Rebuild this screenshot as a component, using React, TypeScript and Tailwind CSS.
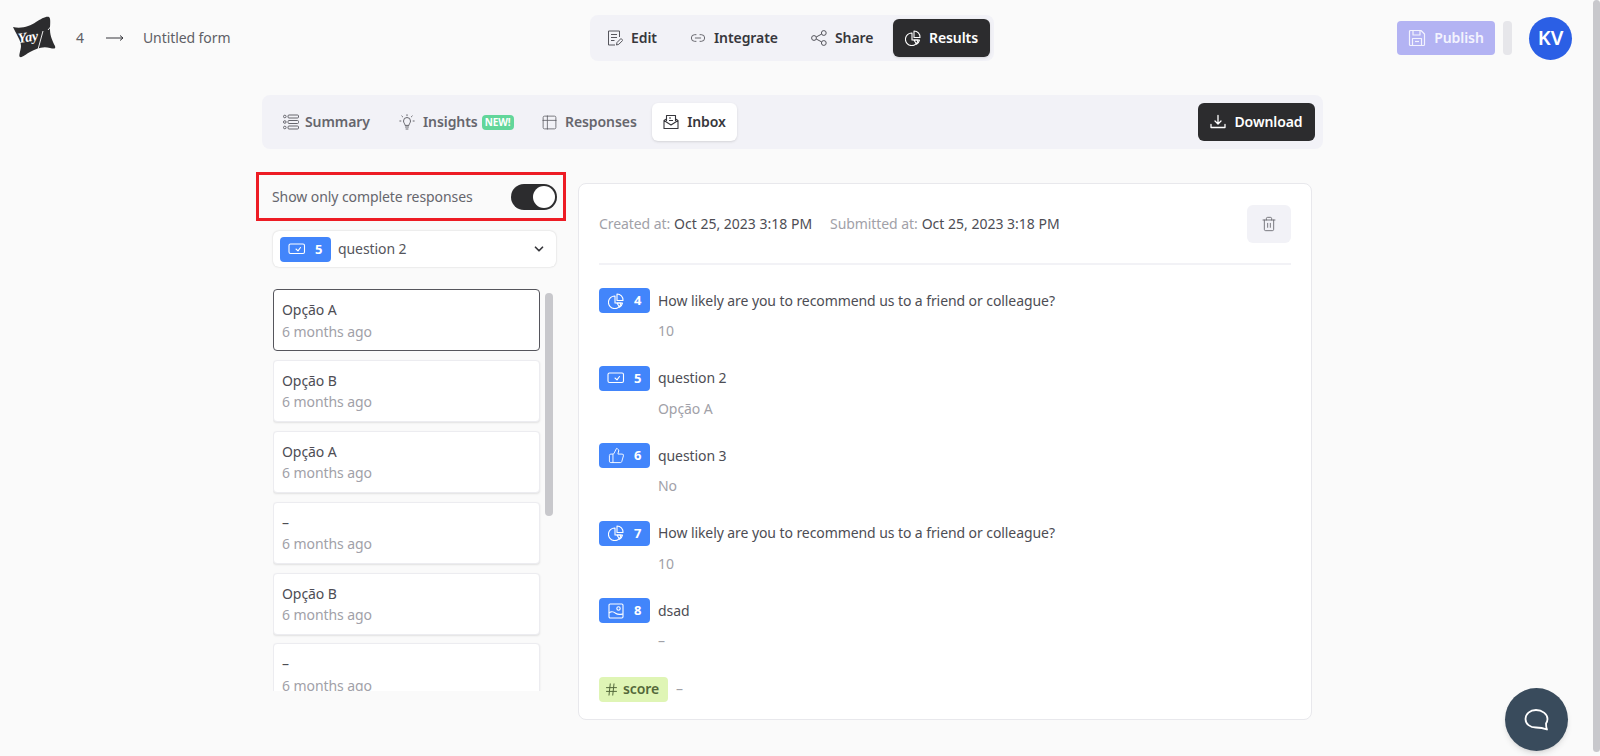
import { ChevronDown, Hash, Link2, ThumbsUp, Trash2, Table2 } from "lucide-react";

const font = "font-['Noto_Sans','Open_Sans',sans-serif] tracking-[-0.005em]";

function LogoMark() {
  return (
    <svg width="44" height="44" viewBox="0 0 44 44">
      <path
        d="M1 11 C10 13 18 10 24 6 C29 3 34 0 37 1 C39 2 38 9 38 14 C38 20 41 26 43 30 C44 33 42 33 38 32 C30 30 24 33 18 36 C14 38 10 42 8 41 C6 40 9 34 9 30 C9 24 4 18 1 11 Z"
        fill="#2c2c2e"
      />
      <text x="6" y="25" fill="#fff" fontSize="14" fontWeight="700" fontStyle="italic" fontFamily="Liberation Serif, serif" transform="rotate(-8 20 22)">
        Yay
      </text>
      <path d="M31 15 L25 37 M36 14 L41 8" stroke="#fff" strokeWidth="0.9" fill="none" />
    </svg>
  );
}

function EditIcon() {
  return (
    <svg width="16" height="16" viewBox="0 0 16 16" fill="none" stroke="currentColor" strokeWidth="1" strokeLinejoin="round">
      <path d="M8 15 H1.5 V1 H12.5 V7" />
      <path d="M4 4.5 H10 M4 7.5 H10 M4 10.5 H7.5" />
      <path d="M9.5 15 L10 12.5 L14 8.5 L15.8 10.3 L11.8 14.3 Z" />
    </svg>
  );
}

function ShareIcon() {
  return (
    <svg width="16" height="16" viewBox="0 0 16 16" fill="none" stroke="currentColor" strokeWidth="1">
      <circle cx="3" cy="8" r="2.4" />
      <circle cx="12.8" cy="3" r="2.4" />
      <circle cx="12.8" cy="13" r="2.4" />
      <path d="M5.2 7 L10.6 4.1 M5.2 9 L10.6 11.9" />
    </svg>
  );
}

function PieIcon({ size = 16 }: { size?: number }) {
  return (
    <svg width={size} height={size} viewBox="0 0 16 16" fill="none" stroke="currentColor" strokeWidth="1.1" strokeLinejoin="round">
      <path d="M7 3 A6.3 6.3 0 1 0 13 10 H7 Z" />
      <path d="M9 1 A6 6 0 0 1 15 7.5 H9 Z" />
      <path d="M9 10 H14.5 C14 12 13 13.5 11.5 14.3 Z" />
    </svg>
  );
}

function InsightIcon() {
  return (
    <svg width="16" height="16" viewBox="0 0 16 16" fill="none" stroke="currentColor" strokeWidth="1" strokeLinecap="round">
      <path d="M6 11 C6 9.5 4.5 9 4.5 7 A3.5 3.5 0 0 1 11.5 7 C11.5 9 10 9.5 10 11 Z" />
      <path d="M6.5 13 H9.5 M7 15 H9" />
      <path d="M8 0.7 V1.7 M2.8 2 L3.6 2.8 M13.2 2 L12.4 2.8 M0.8 7 H1.9 M14.1 7 H15.2" />
    </svg>
  );
}

function SaveIcon() {
  return (
    <svg width="18" height="18" viewBox="0 0 18 18" fill="none" stroke="currentColor" strokeWidth="1.2" strokeLinejoin="round">
      <path d="M1.5 2.5 A1 1 0 0 1 2.5 1.5 H13 L16.5 5 V15.5 A1 1 0 0 1 15.5 16.5 H2.5 A1 1 0 0 1 1.5 15.5 Z" />
      <path d="M5 1.5 V6 H12 V1.5" />
      <rect x="4.5" y="9.5" width="9" height="7" />
      <path d="M7 12.5 H11" />
    </svg>
  );
}

function SummaryIcon() {
  return (
    <svg width="16" height="16" viewBox="0 0 16 16" fill="none" stroke="currentColor" strokeWidth="1">
      <circle cx="1.8" cy="2.5" r="1.3" />
      <circle cx="1.8" cy="8" r="1.3" />
      <circle cx="1.8" cy="13.5" r="1.3" />
      <rect x="5" y="1" width="10.5" height="3" rx="1" />
      <rect x="5" y="6.5" width="10.5" height="3" rx="1" />
      <rect x="5" y="12" width="10.5" height="3" rx="1" />
    </svg>
  );
}

function InboxIcon() {
  return (
    <svg width="16" height="16" viewBox="0 0 16 16" fill="none" stroke="currentColor" strokeWidth="1.1" strokeLinejoin="round">
      <path d="M3.5 7 V1.5 H12.5 V7" />
      <path d="M1 6.5 L3.5 5 M15 6.5 L12.5 5" />
      <path d="M1 6.5 V14.5 H15 V6.5 L8 11 Z" />
      <path d="M6 4 H8 M6 6.5 H10" />
    </svg>
  );
}

function DownloadIcon() {
  return (
    <svg width="16" height="16" viewBox="0 0 16 16" fill="none" stroke="currentColor" strokeWidth="1.3" strokeLinecap="round" strokeLinejoin="round">
      <path d="M8 1.5 V9.5 M5 7 L8 10 L11 7" />
      <path d="M1 10.5 V13.5 H15 V10.5" />
    </svg>
  );
}

function ChoiceIcon() {
  return (
    <svg width="18" height="14" viewBox="0 0 18 14" fill="none" stroke="currentColor" strokeWidth="1.1" strokeLinejoin="round" strokeLinecap="round">
      <rect x="1" y="2" width="15.5" height="9.5" rx="1.5" />
      <path d="M8 7 L10 8.8 L12.5 5.5" />
    </svg>
  );
}

function PictureIcon() {
  return (
    <svg width="16" height="16" viewBox="0 0 16 16" fill="none" stroke="currentColor" strokeWidth="1.1" strokeLinejoin="round">
      <rect x="1" y="1" width="14" height="14" rx="1.2" />
      <circle cx="10.5" cy="5.5" r="1.7" />
      <path d="M1 10 C4 7.5 6 9 8 10.5 C10 12 12 11.5 15 11" />
    </svg>
  );
}

function ChatIcon() {
  return (
    <svg width="28" height="26" viewBox="0 0 28 26" fill="none" stroke="#fff" strokeWidth="1.8" strokeLinejoin="round">
      <path d="M13 3 C7 3 2.5 7 2.5 12 C2.5 17 7 20.5 13 20.5 C16 20.5 19 20.5 24 22.5 C23 20 23 18 23 16.5 C24 15 24.5 13.5 24.5 12 C24.5 7 19 3 13 3 Z" />
    </svg>
  );
}

function TypeBadge({ icon, n }: { icon: React.ReactNode; n: number }) {
  return (
    <div className="w-[51px] h-[25px] shrink-0 bg-[#4285fb] rounded text-white flex items-center pl-2">
      <span className="w-[18px] flex justify-center">{icon}</span>
      <span className="ml-[9px] text-[13px] font-bold">{n}</span>
    </div>
  );
}

const answers = [
  { icon: <PieIcon />, n: 4, title: "How likely are you to recommend us to a friend or colleague?", value: "10" },
  { icon: <ChoiceIcon />, n: 5, title: "question 2", value: "Opção A" },
  { icon: <ThumbsUp size={17} strokeWidth={1.3} />, n: 6, title: "question 3", value: "No" },
  { icon: <PieIcon />, n: 7, title: "How likely are you to recommend us to a friend or colleague?", value: "10" },
  { icon: <PictureIcon />, n: 8, title: "dsad", value: "–" },
];

const items = [
  { title: "Opção A", active: true },
  { title: "Opção B" },
  { title: "Opção A" },
  { title: "–" },
  { title: "Opção B" },
  { title: "–" },
];

export default function App() {
  return (
    <div className={`${font} h-[756px] w-[1600px] overflow-hidden flex bg-[#fafafa] text-[#37373c]`}>
      <div className="flex-1 min-w-0">
        {/* Top bar */}
        <header className="h-[76px] flex items-center pl-3 pr-[21px]">
          <div className="w-[578px] flex items-center text-sm text-[#5f5f66]">
            <LogoMark />
            <span className="ml-[20px]">4</span>
            <span className="ml-[22px] text-[#37373c]">
              <svg width="18" height="8" viewBox="0 0 18 8" fill="none" stroke="currentColor" strokeWidth="1">
                <path d="M0 4 H17 M14 1.5 L17 4 L14 6.5" />
              </svg>
            </span>
            <span className="ml-[19px]">Untitled form</span>
          </div>

          <nav className="h-[46px] bg-[#f2f2f7] rounded-lg flex items-center pl-[17px] pr-1 text-sm font-semibold">
            <div className="flex items-center gap-2 w-[83px]">
              <span className="text-[#55555c]"><EditIcon /></span>
              Edit
            </div>
            <div className="flex items-center gap-2 w-[121px]">
              <Link2 size={16} strokeWidth={1.3} className="text-[#55555c]" />
              Integrate
            </div>
            <div className="flex items-center gap-2 w-[82px]">
              <span className="text-[#55555c]"><ShareIcon /></span>
              Share
            </div>
            <div className="h-[38px] w-[97px] rounded-md bg-[#2c2c2e] text-white flex items-center justify-center gap-2 shadow-sm">
              <PieIcon />
              Results
            </div>
          </nav>

          <div className="ml-auto flex items-center">
            <div className="h-[34px] w-[98px] rounded bg-[#b3b3f3] text-[#f3f3fe] text-sm font-semibold flex items-center justify-center gap-2">
              <SaveIcon />
              Publish
            </div>
            <div className="ml-2 h-[34px] w-[9px] rounded bg-[#e6e6ea]" />
            <div className="ml-[17px] w-[43px] h-[43px] rounded-full bg-[#2b5fe5] text-white text-xl font-semibold flex items-center justify-center">
              KV
            </div>
          </div>
        </header>

        {/* Tabs */}
        <div className="ml-[262px] mt-[19px] w-[1061px] h-[54px] rounded-lg bg-[#f2f2f7] flex items-center justify-between pl-[21px] pr-[8px] text-sm font-semibold text-[#66666d]">
          <div className="flex items-center">
            <div className="flex items-center gap-[6px] w-[116px]">
              <SummaryIcon />
              Summary
            </div>
            <div className="flex items-center gap-2 w-[142px]">
              <InsightIcon />
              <span>Insights</span>
              <span className="-ml-[4px] h-[15px] px-[3px] rounded bg-[#62d69a] text-white text-[10px] font-bold flex items-center">NEW!</span>
            </div>
            <div className="flex items-center gap-[7px] w-[111px]">
              <Table2 size={17} strokeWidth={1.2} />
              Responses
            </div>
            <div className="h-[38px] w-[85px] rounded-md bg-white shadow-sm flex items-center justify-center gap-2 text-[#37373c]">
              <InboxIcon />
              Inbox
            </div>
          </div>
          <div className="h-[38px] w-[117px] rounded-md bg-[#2c2c2e] text-white flex items-center justify-center gap-2">
            <DownloadIcon />
            Download
          </div>
        </div>

        <div className="ml-[256px] flex items-start">
          {/* Left column */}
          <aside className="w-[310px]">
            <div className="mt-[23px] h-[49px] border-[3px] border-[#ed1c24] flex items-center justify-between pl-[13px] pr-[6px] text-sm text-[#66666d]">
              Show only complete responses
              <div className="w-[46px] h-[26px] rounded-full bg-[#2c2c2e] flex items-center justify-end pr-[2px]">
                <div className="w-[22px] h-[22px] rounded-full bg-white" />
              </div>
            </div>

            <div className="ml-[17px] mt-[10px] w-[283px] h-[36px] rounded-md bg-white shadow-[0_0_2px_rgba(0,0,0,0.2)] flex items-center pl-[7px] pr-[10px] text-sm text-[#55555c]">
              <TypeBadge icon={<ChoiceIcon />} n={5} />
              <span className="ml-[7px] flex-1">question 2</span>
              <ChevronDown size={14} strokeWidth={3} className="text-[#37373c]" />
            </div>

            <div className="ml-[17px] mt-[22px] h-[402px] overflow-hidden flex items-start">
              <div className="w-[267px] shrink-0 flex flex-col gap-[8.9px]">
                {items.map((item, i) => (
                  <div
                    key={i}
                    className={`h-[62px] shrink-0 rounded bg-white px-[8px] pt-[9px] text-sm leading-[21.5px] ${
                      item.active ? "border border-[#55555c]" : "border border-[#ececf0] shadow-[0_1px_2px_rgba(0,0,0,0.1)]"
                    }`}
                  >
                    <div className="text-[#4d4d54]">{item.title}</div>
                    <div className="text-[#a1a1a8]">6 months ago</div>
                  </div>
                ))}
              </div>
              <div className="ml-[5px] mt-[4px] w-2 h-[223px] rounded-full bg-[#c8c8cc] shrink-0" />
            </div>
          </aside>

          {/* Response detail */}
          <section className="ml-[12px] mt-[34px] w-[734px] h-[537px] rounded-lg border border-[#e8e8ec] bg-white px-[20px] text-sm">
            <div className="h-[81px] border-b-2 border-[#f2f2f6] flex items-center justify-between">
              <div className="flex">
                <span className="text-[#a1a1a8]">Created at:</span>
                <span className="ml-1 text-[#4d4d54] tracking-normal">Oct 25, 2023 3:18 PM</span>
                <span className="ml-[18px] text-[#a1a1a8]">Submitted at:</span>
                <span className="ml-1 text-[#4d4d54] tracking-normal">Oct 25, 2023 3:18 PM</span>
              </div>
              <div className="w-[44px] h-[38px] rounded-md bg-[#f2f2f7] flex items-center justify-center text-[#66666d]">
                <Trash2 size={16} strokeWidth={1.3} />
              </div>
            </div>

            <div className="pt-[23px] flex flex-col gap-[24.5px]">
              {answers.map((a, i) => (
                <div key={i}>
                  <div className="flex items-center gap-2 h-[25px]">
                    <TypeBadge icon={a.icon} n={a.n} />
                    <span className="text-[#4d4d54]">{a.title}</span>
                  </div>
                  <div className="ml-[59px] mt-[7px] leading-[21px] text-[#a1a1a8]">{a.value}</div>
                </div>
              ))}
              <div className="mt-[1px] flex items-center gap-2">
                <div className="w-[69px] h-[25px] rounded bg-[#dff5b5] text-[#53683a] font-semibold flex items-center gap-1 pl-[5px]">
                  <Hash size={15} strokeWidth={1.6} />
                  score
                </div>
                <span className="text-[#a1a1a8]">–</span>
              </div>
            </div>
          </section>
        </div>
      </div>

      {/* Page scrollbar */}
      <div className="w-[7px] h-[752px] rounded-full bg-[#c8c8cc] shrink-0" />

      {/* Chat bubble */}
      <div className="absolute left-[1505px] top-[688px] w-[63px] h-[63px] rounded-full bg-[#394b5c] shadow-md flex items-center justify-center">
        <ChatIcon />
      </div>
    </div>
  );
}
